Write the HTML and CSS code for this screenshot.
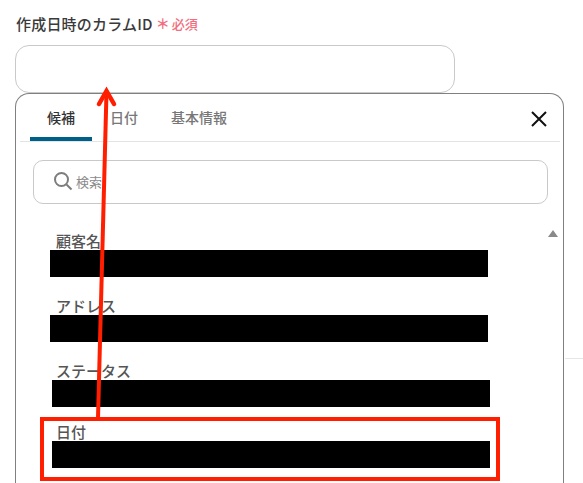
FILE: index.html
```html
<!DOCTYPE html>
<html lang="ja">
<head>
  <meta charset="UTF-8">
  <title>作成日時のカラムID</title>
  <link rel="stylesheet" href="styles.css">
</head>
<body>
  <div class="page">
    <div class="field-label">
      <span>作成日時のカラムID</span>
      <span class="required"><span class="star">＊</span>必須</span>
    </div>
    <div class="field-input"></div>

    <div class="panel">
      <div class="tabs">
        <div class="tab active">候補</div>
        <div class="tab">日付</div>
        <div class="tab">基本情報</div>
        <svg class="close" width="18" height="18" viewBox="0 0 18 18">
          <path d="M2 2L16 16M16 2L2 16" stroke="#111" stroke-width="2" fill="none"/>
        </svg>
      </div>

      <div class="search">
        <svg width="20" height="20" viewBox="0 0 20 20">
          <circle cx="8.5" cy="8.5" r="6.5" stroke="#7d7d7d" stroke-width="2" fill="none"/>
          <path d="M13.5 13.5L18.5 18.5" stroke="#7d7d7d" stroke-width="2" fill="none"/>
        </svg>
        <span>検索</span>
      </div>

      <div class="options">
        <div class="option">
          <div class="option-name">顧客名</div>
          <div class="redacted"></div>
        </div>
        <div class="option">
          <div class="option-name">アドレス</div>
          <div class="redacted"></div>
        </div>
        <div class="option shifted">
          <div class="option-name">ステータス</div>
          <div class="redacted"></div>
        </div>
        <div class="option shifted last">
          <div class="option-name">日付</div>
          <div class="redacted"></div>
        </div>
        <div class="scroll-up"></div>
      </div>
    </div>
  </div>

  <!-- annotations drawn over the screenshot -->
  <div class="red-box"></div>
  <svg class="arrow" width="583" height="483" viewBox="0 0 583 483">
    <path d="M98 418L106.5 92" stroke="#ff1e00" stroke-width="4" fill="none"/>
    <path d="M99 104L106.5 91L114 104" stroke="#ff1e00" stroke-width="4.5" stroke-linecap="round" fill="none"/>
  </svg>
  <div class="side-line"></div>
</body>
</html>
```

FILE: styles.css
```css
html, body {
  margin: 0;
  height: 483px;
  overflow: hidden;
  background: #fff;
}

body {
  font-family: "Noto Sans CJK JP", "Noto Sans", sans-serif;
  color: #333;
}

.page {
  padding: 13px 19px 0 15px;
}

.field-label {
  display: flex;
  align-items: center;
  gap: 3px;
  height: 20px;
  margin-bottom: 12px;
  padding-left: 1px;
  font-size: 15px;
  font-weight: 500;
  letter-spacing: 0.2px;
  color: #3a3a3a;
}

.required {
  display: flex;
  align-items: center;
  gap: 2px;
  font-size: 13px;
  letter-spacing: 0;
  color: #f26d7d;
}

.star {
  font-size: 14px;
  font-weight: 700;
}

.field-input {
  width: 438px;
  height: 46px;
  border: 1px solid #c9c9c9;
  border-radius: 14px;
}

.panel {
  height: 390px;
  box-sizing: border-box;
  border: 1px solid #808080;
  border-bottom: none;
  border-radius: 14px 14px 0 0;
  background: #fff;
}

.tabs {
  display: flex;
  align-items: flex-start;
  position: relative;
  height: 47px;
  margin: 0 3px 0 4px;
  border-bottom: 1px solid #e2e4e6;
}

.tab {
  padding: 13px 15px 0 18px;
  font-size: 14px;
  line-height: 20px;
  color: #777;
  font-weight: 500;
}

.tab.active {
  width: 62px;
  height: 47px;
  box-sizing: border-box;
  margin-left: 10px;
  padding: 13px 0 0;
  text-align: center;
  color: #333;
  border-bottom: 4px solid #005f87;
  border-radius: 4px 4px 0 0;
}

.close {
  margin-left: auto;
  margin-top: 16px;
  margin-right: 12px;
}

.search {
  display: flex;
  align-items: center;
  gap: 3px;
  width: 515px;
  height: 44px;
  box-sizing: border-box;
  margin: 18px 0 0 17px;
  padding: 0 0 2px 19px;
  border: 1px solid #c9c9c9;
  border-radius: 10px;
  font-size: 13px;
  color: #8a8a8a;
}

.options {
  position: relative;
  padding-top: 25px;
}

.option {
  margin-left: 34px;
  width: 438px;
  margin-bottom: 17px;
}

.option.shifted {
  margin-left: 36px;
}

.option.last {
  margin-top: -4px;
}

.option-name {
  height: 21px;
  margin-left: 6px;
  font-size: 15px;
  line-height: 23px;
  font-weight: 500;
  color: #555;
}

.option.shifted .option-name {
  margin-left: 4px;
}

.redacted {
  height: 27px;
  background: #000;
}

.scroll-up {
  position: absolute;
  top: 26px;
  right: 5px;
  border-left: 5px solid transparent;
  border-right: 5px solid transparent;
  border-bottom: 7px solid #8a8a8a;
}

.red-box {
  position: absolute;
  left: 40px;
  top: 417px;
  width: 452px;
  height: 56px;
  border: 4px solid #ff1e00;
}

.arrow {
  position: absolute;
  left: 0;
  top: 0;
}

.side-line {
  position: absolute;
  left: 565px;
  top: 358px;
  width: 18px;
  height: 1px;
  background: #e6e6e6;
}
```
